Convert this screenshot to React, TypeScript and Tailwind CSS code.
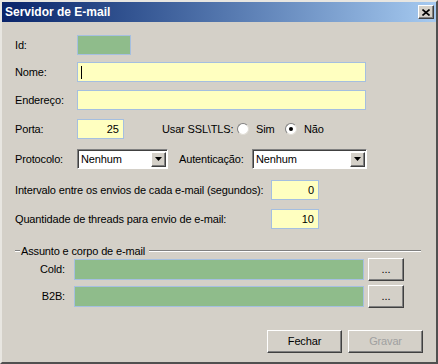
import React from 'react';

const face = 'bg-[#d4d0c8]';
const raised =
  'border border-t-white border-l-white border-r-[#404040] border-b-[#404040] shadow-[inset_-1px_-1px_0_#808080]';
const sunken =
  'border border-t-[#808080] border-l-[#808080] border-r-white border-b-white shadow-[inset_1px_1px_0_#404040]';

function Label({ children, className = '' }: { children: React.ReactNode; className?: string }) {
  return (
    <span className={`text-[11px] leading-none tracking-[-0.15px] whitespace-nowrap text-black ${className}`}>
      {children}
    </span>
  );
}

function Field({ className = '', children }: { className?: string; children?: React.ReactNode }) {
  return (
    <div className={`h-[20px] shrink-0 border border-[#a5bfe0] flex items-center text-[11px] text-black ${className}`}>
      {children}
    </div>
  );
}

function Combo({ width }: { width: string }) {
  return (
    <div className={`h-[20px] shrink-0 ${width} bg-white ${sunken} flex items-center justify-between pl-[3px] pr-[1px]`}>
      <span className="text-[11px] tracking-[-0.15px] text-black">Nenhum</span>
      <div className={`w-[15px] h-[15px] ${face} ${raised} flex items-center justify-center`}>
        <svg width="7" height="4" viewBox="0 0 7 4">
          <path d="M0 0h7L3.5 4z" fill="#000" />
        </svg>
      </div>
    </div>
  );
}

function Radio({ checked }: { checked?: boolean }) {
  return (
    <div className="w-[12px] h-[12px] shrink-0 rounded-full bg-white border border-t-[#808080] border-l-[#808080] border-r-[#e0ddd6] border-b-[#e0ddd6] flex items-center justify-center">
      {checked && <div className="w-[4px] h-[4px] rounded-full bg-black" />}
    </div>
  );
}

function Button({ children, disabled }: { children: React.ReactNode; disabled?: boolean }) {
  return (
    <div
      className={`w-[75px] h-[23px] ${face} ${raised} flex items-center justify-center text-[11px] tracking-[-0.15px] ${
        disabled ? 'text-[#a0a0a0]' : 'text-black'
      }`}
    >
      {children}
    </div>
  );
}

function DotsButton() {
  return (
    <div className="ml-[4px]">
      <div className={`w-[36px] h-[23px] ${face} ${raised} flex items-center justify-center text-[11px] text-black`}>
        ...
      </div>
    </div>
  );
}

export default function App() {
  return (
    <div
      className={`w-[438px] h-[364px] ${face} border-2 border-t-[#e8e6e1] border-l-[#e8e6e1] border-r-[#505050] border-b-[#505050] flex flex-col overflow-hidden`}
      style={{ fontFamily: '"Liberation Sans", Arial, sans-serif' }}
    >
      {/* title bar */}
      <div className="h-[20px] shrink-0 bg-gradient-to-r from-[#0a246a] to-[#a6caf0] flex items-center justify-between pl-[3px] pr-[2px]">
        <span className="text-[12px] font-bold text-white">Servidor de E-mail</span>
        <div className={`w-[16px] h-[14px] ${face} ${raised} flex items-center justify-center`}>
          <svg width="8" height="7" viewBox="0 0 8 7">
            <path d="M0.5 0.5L7.5 6.5M7.5 0.5L0.5 6.5" stroke="#000" strokeWidth="1.6" />
          </svg>
        </div>
      </div>

      <div className="flex flex-col pl-[13px]">
        <div className="mt-[13px] h-[20px] flex items-center">
          <Label className="w-[62px]">Id:</Label>
          <Field className="w-[54px] bg-[#8fbc8b]" />
        </div>

        <div className="mt-[7px] h-[20px] flex items-center">
          <Label className="w-[62px]">Nome:</Label>
          <Field className="w-[289px] bg-[#ffffc0] pl-[3px]">
            <span className="w-px h-[13px] bg-black" />
          </Field>
        </div>

        <div className="mt-[8px] h-[20px] flex items-center">
          <Label className="w-[62px]">Endereço:</Label>
          <Field className="w-[289px] bg-[#ffffc0]" />
        </div>

        <div className="mt-[9px] h-[20px] flex items-center">
          <Label className="w-[62px]">Porta:</Label>
          <Field className="w-[47px] bg-[#ffffc0] justify-end pr-[4px]">25</Field>
          <Label className="ml-[38px] w-[75px]">Usar SSL\TLS:</Label>
          <Radio />
          <Label className="ml-[7px] w-[29px]">Sim</Label>
          <Radio checked />
          <Label className="ml-[7px]">Não</Label>
        </div>

        <div className="mt-[10px] h-[20px] flex items-center">
          <Label className="w-[62px]">Protocolo:</Label>
          <Combo width="w-[91px]" />
          <Label className="ml-[11px] w-[73px]">Autenticação:</Label>
          <Combo width="w-[115px]" />
        </div>

        <div className="mt-[11px] h-[20px] flex items-center">
          <Label className="w-[256px]">Intervalo entre os envios de cada e-mail (segundos):</Label>
          <Field className="w-[48px] bg-[#ffffc0] justify-end pr-[4px]">0</Field>
        </div>

        <div className="mt-[9px] h-[20px] flex items-center">
          <Label className="w-[256px]">Quantidade de threads para envio de e-mail:</Label>
          <Field className="w-[48px] bg-[#ffffc0] justify-end pr-[4px]">10</Field>
        </div>

        {/* group box header */}
        <div className="mt-[15px] h-[14px] w-[406px] flex items-center">
          <div className="w-[5px] border-t border-t-[#808080] border-b border-b-white" />
          <Label className="px-[1px]">Assunto e corpo de e-mail</Label>
          <div className="flex-1 ml-[3px] border-t border-t-[#808080] border-b border-b-white" />
        </div>

        <div className="h-[23px] flex items-center">
          <Label className="w-[50px] text-right">Cold:</Label>
          <Field className="ml-[9px] w-[290px] h-[21px] bg-[#8fbc8b]" />
          <DotsButton />
        </div>

        <div className="mt-[4px] h-[23px] flex items-center">
          <Label className="w-[50px] text-right">B2B:</Label>
          <Field className="ml-[9px] w-[290px] h-[21px] bg-[#8fbc8b]" />
          <DotsButton />
        </div>

        <div className="mt-[22px] flex gap-[6px] pl-[252px]">
          <Button>Fechar</Button>
          <Button disabled>Gravar</Button>
        </div>
      </div>
    </div>
  );
}
